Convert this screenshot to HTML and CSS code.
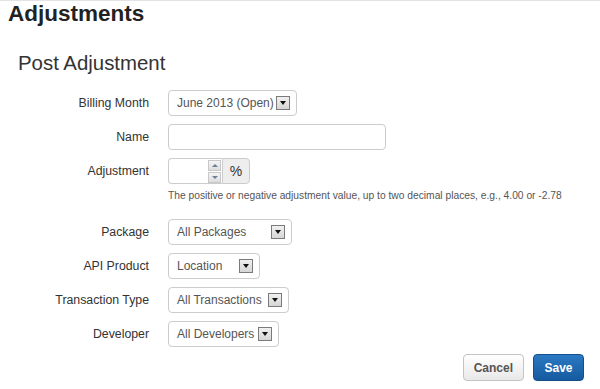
FILE: index.html
```html
<!DOCTYPE html>
<html lang="en">
<head>
    <meta charset="UTF-8">
    <meta name="viewport" content="width=device-width, initial-scale=1.0">
    <title>Adjustments</title>

    <link rel="stylesheet" href="styles.css">
</head>
<body>
    <header class="page-head">
        <h1>Adjustments</h1>
    </header>
    <main>
        <h2>Post Adjustment</h2>

        <form class="form">
            <div class="row">
                <label>Billing Month</label>
                <div class="select w-month">
                    <span>June 2013 (Open)</span>
                    <span class="arrow"></span>
                </div>
            </div>

            <div class="row">
                <label>Name</label>
                <input class="text" type="text">
            </div>

            <div class="row row-help">
                <label>Adjustment</label>
                <div class="field">
                    <div class="addon-group">
                        <div class="number">
                            <input type="text">
                            <div class="spin">
                                <span class="up"></span>
                                <span class="down"></span>
                            </div>
                        </div>
                        <span class="addon">%</span>
                    </div>
                    <p class="help">The positive or negative adjustment value, up to two decimal places, e.g., 4.00 or -2.78</p>
                </div>
            </div>

            <div class="row">
                <label>Package</label>
                <div class="select w-package">
                    <span>All Packages</span>
                    <span class="arrow"></span>
                </div>
            </div>

            <div class="row">
                <label>API Product</label>
                <div class="select w-product">
                    <span>Location</span>
                    <span class="arrow"></span>
                </div>
            </div>

            <div class="row">
                <label>Transaction Type</label>
                <div class="select w-type">
                    <span>All Transactions</span>
                    <span class="arrow"></span>
                </div>
            </div>

            <div class="row">
                <label>Developer</label>
                <div class="select w-dev">
                    <span>All Developers</span>
                    <span class="arrow"></span>
                </div>
            </div>

            <div class="actions">
                <button type="button" class="btn">Cancel</button>
                <button type="button" class="btn btn-primary">Save</button>
            </div>
        </form>
    </main>
</body>
</html>
```

FILE: styles.css
```css
* {
    box-sizing: border-box;
}

body {
    margin: 0;
    font-family: "Liberation Sans", Arial, sans-serif;
    font-size: 12px;
    color: #333;
    background-color: white;
}

.page-head {
    border-top: 1px solid #e3e3e3;
    padding-left: 8px;
}

h1 {
    margin: 0;
    font-size: 22.5px;
    line-height: 26px;
    font-weight: bold;
    color: #222;
}

h2 {
    margin: 24px 0 15px 18px;
    font-size: 20.4px;
    line-height: 24px;
    font-weight: normal;
    color: #333;
}

.form {
    display: flex;
    flex-direction: column;
    gap: 8px;
    padding-right: 16px;
}

.row {
    display: grid;
    grid-template-columns: 149px 1fr;
    column-gap: 19px;
    align-items: start;
}

.row label {
    text-align: right;
    line-height: 26px;
    font-size: 12.3px;
}

.select {
    display: flex;
    align-items: center;
    justify-content: space-between;
    height: 26px;
    padding: 0 6px 0 8px;
    border: 1px solid #ccc;
    border-radius: 4px;
    background-color: white;
    color: #555;
}

.w-month { width: 129px; }
.w-package { width: 124px; }
.w-product { width: 92px; }
.w-type { width: 121px; }
.w-dev { width: 111px; }

.arrow {
    position: relative;
    width: 14px;
    height: 14px;
    border: 1px solid #7a7a7a;
    background: linear-gradient(#f0f0f0, #d6d6d6);
}

.arrow::after {
    content: "";
    position: absolute;
    left: 3px;
    top: 4px;
    border-left: 3px solid transparent;
    border-right: 3px solid transparent;
    border-top: 4px solid #111;
}

input {
    font-family: inherit;
    font-size: 12px;
    color: #555;
    outline: none;
}

.text {
    width: 218px;
    height: 26px;
    padding: 0 8px;
    border: 1px solid #ccc;
    border-radius: 4px;
}

.field {
    display: flex;
    flex-direction: column;
}

.addon-group {
    display: flex;
    height: 26px;
}

.number {
    display: flex;
    align-items: center;
    width: 54px;
    border: 1px solid #ccc;
    border-right: none;
    border-radius: 4px 0 0 4px;
    padding-right: 1px;
}

.number input {
    width: 39px;
    height: 24px;
    border: none;
    padding: 0 6px;
    background: transparent;
}

.spin {
    display: flex;
    flex-direction: column;
    gap: 1px;
}

.spin span {
    position: relative;
    width: 13px;
    height: 11px;
    border: 1px solid #c8c8c8;
    background: linear-gradient(#f4f4f4, #dedede);
}

.spin span::after {
    content: "";
    position: absolute;
    left: 3px;
    border-left: 3px solid transparent;
    border-right: 3px solid transparent;
}

.spin .up::after {
    top: 3px;
    border-bottom: 3px solid #6d7f9a;
}

.spin .down::after {
    top: 3px;
    border-top: 3px solid #6d7f9a;
}

.addon {
    display: flex;
    align-items: center;
    justify-content: center;
    width: 28px;
    border: 1px solid #ccc;
    border-radius: 0 4px 4px 0;
    background-color: #eee;
    color: #333;
    font-size: 14px;
}

.help {
    margin: 5px 0 8px 0;
    font-size: 10.25px;
    line-height: 14px;
    color: #555;
}

.actions {
    display: flex;
    justify-content: flex-end;
    gap: 9px;
    margin-top: -1px;
}

.btn {
    height: 27px;
    padding: 0 10px;
    font-family: inherit;
    font-size: 12px;
    font-weight: bold;
    color: #555;
    border: 1px solid #c4c4c4;
    border-radius: 4px;
    background: linear-gradient(#ffffff, #e8e8e8);
}

.btn-primary {
    width: 51px;
    color: white;
    border-color: #144f8c;
    background: linear-gradient(#2b79c2, #155a9f);
}
```
